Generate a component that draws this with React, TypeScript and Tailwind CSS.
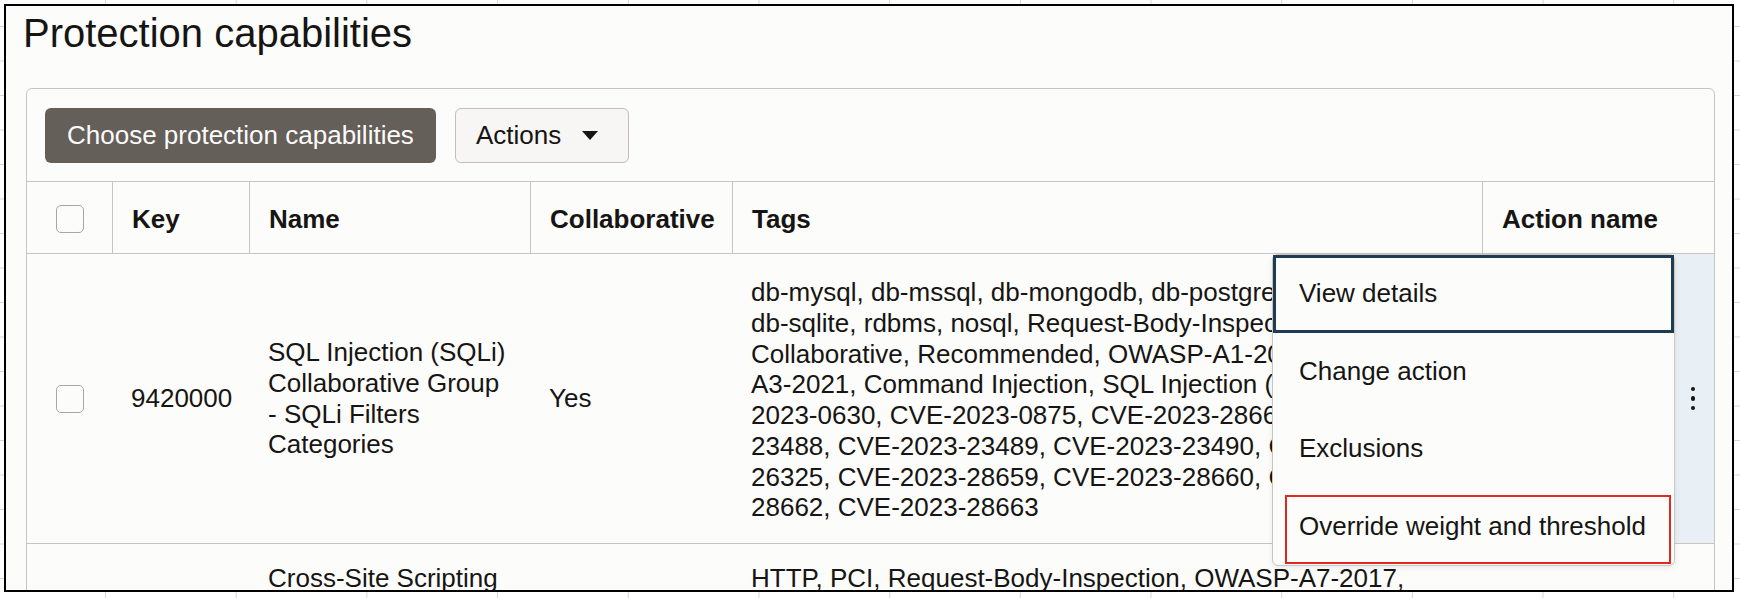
import React from "react";

const cols = "grid grid-cols-[85px_137px_281px_202px_750px_1fr]";

function Checkbox() {
  return <div className="w-[28px] h-[28px] rounded-[5px] border-[1.5px] border-[#a9a5a0] bg-[#fcfcfa]" />;
}

export default function App() {
  return (
    <div className="w-[1740px] h-[598px] overflow-hidden bg-white bg-[linear-gradient(to_right,#d6d6d6_1px,transparent_1px),linear-gradient(to_bottom,#d6d6d6_1px,transparent_1px)] bg-[length:130.7px_34.5px] bg-[position:105px_26px] font-['Liberation_Sans',Arial,sans-serif] text-[#161513]">
      <div className="mt-[4px] ml-[4px] w-[1730px] h-[588px] border-2 border-black bg-[#fcfcfa] overflow-hidden px-[20px] pt-[3px]">
        <h1 className="-ml-[3px] text-[40px] leading-[48px] font-normal">Protection capabilities</h1>
        <div className="relative mt-[31px] w-[1689px] border border-[#c9c5c1] rounded-[6px] bg-[#fcfcfa]">
          <div className="h-[93px] px-[18px] flex items-center gap-[19px] border-b border-[#c9c5c1]">
            <button className="h-[55px] px-[22px] rounded-[6px] bg-[#655f5a] text-[#fcfbfa] text-[26px] leading-none">
              Choose protection capabilities
            </button>
            <button className="h-[55px] pl-[20px] pr-[30px] rounded-[6px] bg-[#f7f6f4] border border-[#c2beb9] text-[26px] leading-none flex items-center gap-[21px]">
              Actions
              <svg width="16" height="9" viewBox="0 0 16 9"><path d="M0 0 L16 0 L8 9 Z" fill="#161513" /></svg>
            </button>
          </div>
          {/* header */}
          <div className={`${cols} h-[72px] border-b border-[#c9c5c1] text-[26px] font-bold`}>
            <div className="flex items-center justify-center pt-[2px]"><Checkbox /></div>
            <div className="flex items-center pl-[19px] pt-[3px] border-l border-[#c9c5c1]">Key</div>
            <div className="flex items-center pl-[19px] pt-[3px] border-l border-[#c9c5c1]">Name</div>
            <div className="flex items-center pl-[19px] pt-[3px] border-l border-[#c9c5c1]">Collaborative</div>
            <div className="flex items-center pl-[19px] pt-[3px] border-l border-[#c9c5c1]">Tags</div>
            <div className="flex items-center pl-[19px] pt-[3px] border-l border-[#c9c5c1]">Action name</div>
          </div>
          {/* row 1 */}
          <div className={`${cols} h-[290px] border-b border-[#c9c5c1] text-[26px] leading-[30.75px]`}>
            <div className="flex items-center justify-center"><Checkbox /></div>
            <div className="flex items-center pl-[19px]">9420000</div>
            <div className="flex items-center pl-[19px]">
              <div>SQL Injection (SQLi)<br />Collaborative Group<br />- SQLi Filters<br />Categories</div>
            </div>
            <div className="flex items-center pl-[19px]">Yes</div>
            <div className="flex items-center pl-[19px] pt-[3px] whitespace-nowrap">
              <div>
                db-mysql, db-mssql, db-mongodb, db-postgres, db-oracle,<br />
                db-sqlite, rdbms, nosql, Request-Body-Inspection,<br />
                Collaborative, Recommended, OWASP-A1-2017, OWASP-<br />
                A3-2021, Command Injection, SQL Injection (SQLi), CVE-<br />
                2023-0630, CVE-2023-0875, CVE-2023-28661, CVE-2023-<br />
                23488, CVE-2023-23489, CVE-2023-23490, CVE-2023-<br />
                26325, CVE-2023-28659, CVE-2023-28660, CVE-2023-<br />
                28662, CVE-2023-28663
              </div>
            </div>
            <div className="flex items-center justify-end pr-[19px] bg-[#e8f0f5]">
              <div className="flex flex-col gap-[5px]">
                <span className="block w-[4.5px] h-[4.5px] rounded-full bg-[#161513]" />
                <span className="block w-[4.5px] h-[4.5px] rounded-full bg-[#161513]" />
                <span className="block w-[4.5px] h-[4.5px] rounded-full bg-[#161513]" />
              </div>
            </div>
          </div>
          {/* row 2 */}
          <div className={`${cols} h-[200px] text-[26px] leading-[30.75px]`}>
            <div />
            <div />
            <div className="pl-[19px] pt-[19px]">Cross-Site Scripting</div>
            <div />
            <div className="pl-[19px] pt-[19px] whitespace-nowrap">HTTP, PCI, Request-Body-Inspection, OWASP-A7-2017,</div>
            <div />
          </div>

          {/* dropdown menu */}
          <div className="absolute left-[1245px] top-[165px] w-[403px] border border-[#c9c5c1] rounded-[6px] bg-[#fcfcfa] text-[26px] shadow-[0_2px_6px_rgba(0,0,0,0.08)]">
            <div className="h-[77.5px] flex items-center pl-[23px] border-[3px] border-[#1e3d55]">View details</div>
            <div className="h-[77.5px] flex items-center pl-[26px]">Change action</div>
            <div className="h-[77.5px] flex items-center pl-[26px]">Exclusions</div>
            <div className="relative h-[77.5px] flex items-center pl-[26px]">
              Override weight and threshold
              <div className="absolute left-[12px] top-[7px] w-[386px] h-[69px] border-2 border-[#e0291e]" />
            </div>
          </div>
        </div>
      </div>
    </div>
  );
}
